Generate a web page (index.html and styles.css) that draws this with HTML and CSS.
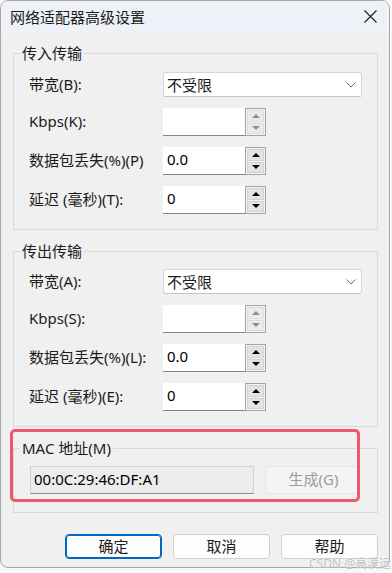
FILE: index.html
```html
<!DOCTYPE html>
<html>
<head>
  <title>网络适配器高级设置</title>
  <link rel="stylesheet" href="styles.css">
</head>
<body>
  <div class="window">
    <div class="titlebar">
      <span class="title">网络适配器高级设置</span>
      <svg class="close" width="13" height="13" viewBox="0 0 13 13">
        <path d="M0.5 0.5 L12.5 12.5 M12.5 0.5 L0.5 12.5" stroke="#1b1b1b" stroke-width="1.1" fill="none"/>
      </svg>
    </div>

    <div class="content">
      <!-- Inbound -->
      <fieldset class="group group-first">
        <legend>传入传输</legend>
        <div class="form">
          <label>带宽(B):</label>
          <div class="combo">
            <span>不受限</span>
            <svg width="10" height="6" viewBox="0 0 10 6"><path d="M0.5 0.5 L5 5 L9.5 0.5" stroke="#6a6a6a" fill="none"/></svg>
          </div>

          <label>Kbps(K):</label>
          <div class="spin disabled">
            <input type="text" value="">
            <div class="spin-btns"><span class="up"></span><span class="down"></span></div>
          </div>

          <label>数据包丢失(%)(P)</label>
          <div class="spin">
            <input type="text" value="0.0">
            <div class="spin-btns"><span class="up"></span><span class="down"></span></div>
          </div>

          <label>延迟 (毫秒)(T):</label>
          <div class="spin">
            <input type="text" value="0">
            <div class="spin-btns"><span class="up"></span><span class="down"></span></div>
          </div>
        </div>
      </fieldset>

      <!-- Outbound -->
      <fieldset class="group">
        <legend>传出传输</legend>
        <div class="form">
          <label>带宽(A):</label>
          <div class="combo">
            <span>不受限</span>
            <svg width="10" height="6" viewBox="0 0 10 6"><path d="M0.5 0.5 L5 5 L9.5 0.5" stroke="#6a6a6a" fill="none"/></svg>
          </div>

          <label>Kbps(S):</label>
          <div class="spin disabled">
            <input type="text" value="">
            <div class="spin-btns"><span class="up"></span><span class="down"></span></div>
          </div>

          <label>数据包丢失(%)(L):</label>
          <div class="spin">
            <input type="text" value="0.0">
            <div class="spin-btns"><span class="up"></span><span class="down"></span></div>
          </div>

          <label>延迟 (毫秒)(E):</label>
          <div class="spin">
            <input type="text" value="0">
            <div class="spin-btns"><span class="up"></span><span class="down"></span></div>
          </div>
        </div>
      </fieldset>

      <!-- MAC -->
      <fieldset class="group group-mac">
        <legend>MAC 地址(M)</legend>
        <div class="mac-row">
          <input class="mac-input" type="text" value="00:0C:29:46:DF:A1" readonly>
          <button class="gen-btn" disabled>生成(G)</button>
        </div>
      </fieldset>

      <div class="dialog-buttons">
        <button class="btn btn-default">确定</button>
        <button class="btn">取消</button>
        <button class="btn">帮助</button>
      </div>
    </div>

    <div class="highlight"></div>
  </div>
  <div class="watermark">CSDN @高漠远</div>
</body>
</html>
```

FILE: styles.css
```css
html, body {
  margin: 0;
  padding: 0;
}
body {
  position: relative;
  background-color: #f8f8f8;
  font-family: "Noto Sans", "Noto Sans CJK SC", sans-serif;
  font-size: 15px;
  line-height: 20px;
  color: #1b1b1b;
  width: 392px;
  height: 573px;
  overflow: hidden;
}
.window {
  position: relative;
  width: 390px;
  height: 568px;
  box-sizing: border-box;
  background-color: #f0f0f0;
  border: 1px solid #a8a8a8;
  border-radius: 8px;
  overflow: hidden;
}
.titlebar {
  height: 34px;
  background-color: #eef2f8;
  display: flex;
  align-items: center;
  justify-content: space-between;
  padding: 0 12px 0 9px;
}
.title {
  margin-top: -2px;
}
.close {
  margin-top: -3px;
}
.content {
  padding: 0 11px 0 12px;
}

/* group boxes */
.group {
  margin: 8px 0 0 0;
  padding: 0 0 0 6px;
  border: 1px solid #dadada;
  border-radius: 0;
  min-width: 0;
}
.group + .group {
  margin-top: 11px;
}
.group legend {
  padding: 0 2px;
  line-height: 20px;
}
.form {
  display: grid;
  grid-template-columns: 134px auto;
  grid-template-rows: 25px 28px 28px 28px;
  row-gap: 11px;
  align-items: center;
  padding: 8px 0 15px 9px;
}
.group-first .form {
  padding-top: 9px;
}
.form label {
  white-space: nowrap;
  margin-top: -2px;
}

/* combo box */
.combo {
  width: 199px;
  height: 25px;
  box-sizing: border-box;
  background-color: #fff;
  border: 1px solid #d6d6d6;
  border-bottom-color: #c4c4c4;
  border-radius: 3px;
  display: flex;
  align-items: center;
  justify-content: space-between;
  padding: 0 5px 0 3px;
}
.combo svg {
  margin-top: 1px;
}

/* spin edit */
.spin {
  display: flex;
  height: 28px;
}
.spin input {
  width: 82px;
  height: 28px;
  box-sizing: border-box;
  border: none;
  border-bottom: 1px solid #858585;
  background-color: #fff;
  font: inherit;
  color: #000;
  padding: 0 4px 4px 4px;
  outline: none;
}
.spin-btns {
  width: 21px;
  height: 28px;
  box-sizing: border-box;
  border: 1px solid #a3a3a3;
  background-color: #f4f4f4;
  display: flex;
  flex-direction: column;
  padding: 1px;
  gap: 1px;
}
.spin-btns span {
  flex: 1;
  background-color: #e3e3e3;
  border: 1px solid #d2d2d2;
  display: flex;
  align-items: center;
  justify-content: center;
}
.spin-btns .up::after {
  content: "";
  border-left: 4px solid transparent;
  border-right: 4px solid transparent;
  border-bottom: 4px solid #000;
}
.spin-btns .down::after {
  content: "";
  border-left: 4px solid transparent;
  border-right: 4px solid transparent;
  border-top: 4px solid #000;
}
.spin.disabled .spin-btns span {
  background-color: #ebebeb;
  border-color: #dcdcdc;
}
.spin.disabled .up::after {
  border-bottom-color: #8f8f8f;
}
.spin.disabled .down::after {
  border-top-color: #8f8f8f;
}

/* mac */
.mac-row {
  display: flex;
  align-items: center;
  gap: 11px;
  padding: 8px 0 18px 10px;
}
.mac-input {
  width: 224px;
  height: 28px;
  box-sizing: border-box;
  background-color: #ececec;
  border: 1px solid #d2d2d2;
  border-bottom-color: #8a8a8a;
  font: inherit;
  color: #000;
  padding: 0 3px 3px 3px;
  outline: none;
}
.gen-btn {
  width: 97px;
  height: 28px;
  font: inherit;
  color: #9c9c9c;
  background-color: #f4f4f4;
  border: 1px solid #e6e6e6;
  border-radius: 4px;
  padding: 0 0 3px 0;
}

/* dialog buttons */
.dialog-buttons {
  display: flex;
  justify-content: flex-end;
  gap: 11px;
  margin-top: 21px;
}
.btn {
  width: 97px;
  height: 25px;
  font: inherit;
  color: #1b1b1b;
  background-color: #fdfdfd;
  border: 1px solid #d0d0d0;
  border-radius: 4px;
  padding: 0 0 2px 0;
}
.btn-default {
  border-color: #0067c0;
  box-shadow: inset 0 0 0 1px #0067c0;
}

/* annotation overlays */
.highlight {
  position: absolute;
  left: 9px;
  top: 428px;
  width: 350px;
  height: 73px;
  box-sizing: border-box;
  border: 3px solid #f2566a;
  border-radius: 5px;
}
.watermark {
  position: absolute;
  right: 1px;
  top: 557px;
  font-size: 12px;
  line-height: 13px;
  color: rgba(150, 150, 150, 0.6);
  text-shadow: 0 0 1px #fff;
  white-space: nowrap;
}
```
